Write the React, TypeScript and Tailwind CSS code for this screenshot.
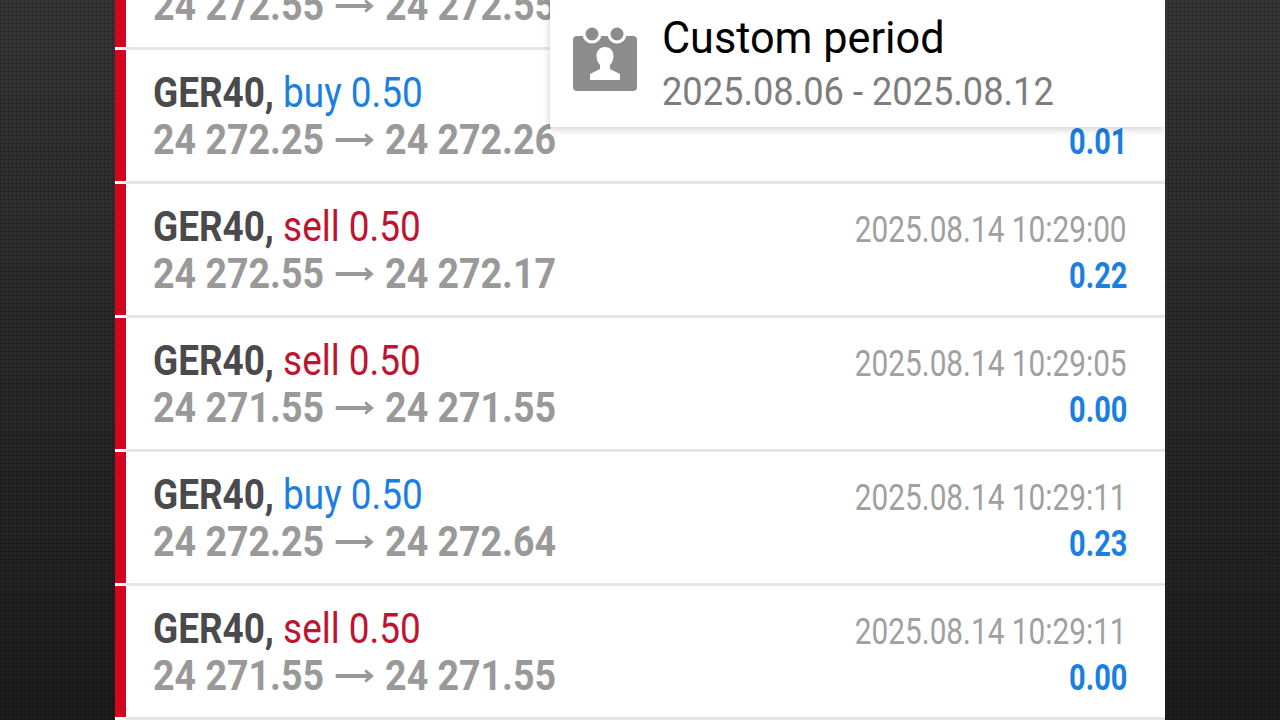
import React from 'react';

interface TradeRowProps {
  side: 'buy' | 'sell';
  open: string;
  close: string;
  time?: string;
  profit: string;
}

// the first two rows sit under the period popup, so their times never show
const rows: TradeRowProps[] = [
  { side: 'sell', open: '24 272.55', close: '24 272.55', profit: '0.00' },
  { side: 'buy', open: '24 272.25', close: '24 272.26', profit: '0.01' },
  { side: 'sell', open: '24 272.55', close: '24 272.17', time: '2025.08.14 10:29:00', profit: '0.22' },
  { side: 'sell', open: '24 271.55', close: '24 271.55', time: '2025.08.14 10:29:05', profit: '0.00' },
  { side: 'buy', open: '24 272.25', close: '24 272.64', time: '2025.08.14 10:29:11', profit: '0.23' },
  { side: 'sell', open: '24 271.55', close: '24 271.55', time: '2025.08.14 10:29:11', profit: '0.00' },
];

const Arrow = () => (
  <svg width="44" height="14" viewBox="0 0 44 14" fill="none" stroke="#999999" className="mx-[13px] shrink-0">
    <path d="M0 7h41" strokeWidth="4" />
    <path d="M34 1.500 41.500 7 34 12.500" strokeWidth="3" />
  </svg>
);

const TradeRow: React.FC<TradeRowProps> = ({ side, open, close, time, profit }) => {
  return (
    <div className="flex h-[134px] shrink-0 flex-col">
      <div className="flex h-[131px] bg-white">
        <div className="w-[11px] bg-[#d5051f]" />
        <div className="flex flex-1 justify-between pl-[27px] pr-[38px] pt-[19px]">
          <div className="flex flex-col">
            <div className="h-[47px] origin-left scale-x-[0.858] whitespace-nowrap text-[43px] leading-[47px]">
              <span className="font-bold text-[#4a4a4c]">GER40, </span>
              <span className={side === 'buy' ? 'text-[#1a7fe0]' : 'text-[#bf1330]'}>{side} 0.50</span>
            </div>
            <div className="flex h-[47px] origin-left scale-x-[0.873] items-center whitespace-nowrap text-[43px] font-bold leading-[47px] text-[#999999]">
              <span>{open}</span>
              <Arrow />
              <span>{close}</span>
            </div>
          </div>
          <div className="flex flex-col items-end pt-[4px]">
            <div className="h-[47px] origin-right scale-x-[0.827] whitespace-nowrap text-[36px] leading-[47px] text-[#a0a0a0]">{time}</div>
            <div className="-mt-[1px] h-[47px] origin-right scale-x-[0.805] whitespace-nowrap text-[36px] font-bold leading-[47px] text-[#1a7fe0]">{profit}</div>
          </div>
        </div>
      </div>
      <div className="flex h-[3px] bg-[#e6e6e6]">
        <div className="w-[11px] bg-white" />
      </div>
    </div>
  );
};

const CalendarIcon = () => (
  <svg width="64" height="64" viewBox="0 0 64 64" className="shrink-0">
    <rect x="0" y="9" width="64" height="55" rx="4" fill="#8c8c8c" />
    <circle cx="19" cy="7" r="9.500" fill="#fff" />
    <circle cx="44" cy="7" r="9.500" fill="#fff" />
    <circle cx="19" cy="7" r="6.500" fill="#8c8c8c" />
    <circle cx="44" cy="7" r="6.500" fill="#8c8c8c" />
    <path d="M32 20c-5.500 0-8.500 4-8.500 9 0 4 1.500 7 3.500 9v4l-10 5v6h30v-6l-10-5v-4c2-2 3.500-5 3.500-9 0-5-3-9-8.500-9z" fill="#fff" />
  </svg>
);

export default function App() {
  return (
    <div className="relative flex h-[720px] w-[1280px] justify-center overflow-hidden bg-[#1a1a1a] bg-[image:repeating-linear-gradient(0deg,rgba(0,0,0,0.16)_0_1px,transparent_1px_4px),repeating-linear-gradient(90deg,rgba(0,0,0,0.16)_0_1px,transparent_1px_4px),linear-gradient(180deg,#363636_0%,#1d1d1d_100%)] font-['Roboto',sans-serif]">
      <div className="relative h-[720px] w-[1050px] overflow-hidden">
        <div className="-mt-[84px] flex flex-col">
          {rows.map((row, i) => (
            <TradeRow key={i} {...row} />
          ))}
        </div>
        <div className="absolute right-0 top-0 flex h-[127px] w-[615px] items-start gap-[25px] bg-white pl-[23px] pt-[27px] shadow-[0_2px_8px_rgba(0,0,0,0.2)]">
          <CalendarIcon />
          <div className="-mt-[27px] flex flex-col">
            <div className="mt-[14px] origin-left scale-x-[0.982] whitespace-nowrap text-[44px] leading-[48px] text-black">Custom period</div>
            <div className="mt-[9px] origin-left scale-x-[0.953] whitespace-nowrap text-[38px] leading-[42px] text-[#7d7d7d]">2025.08.06 - 2025.08.12</div>
          </div>
        </div>
      </div>
    </div>
  );
}
